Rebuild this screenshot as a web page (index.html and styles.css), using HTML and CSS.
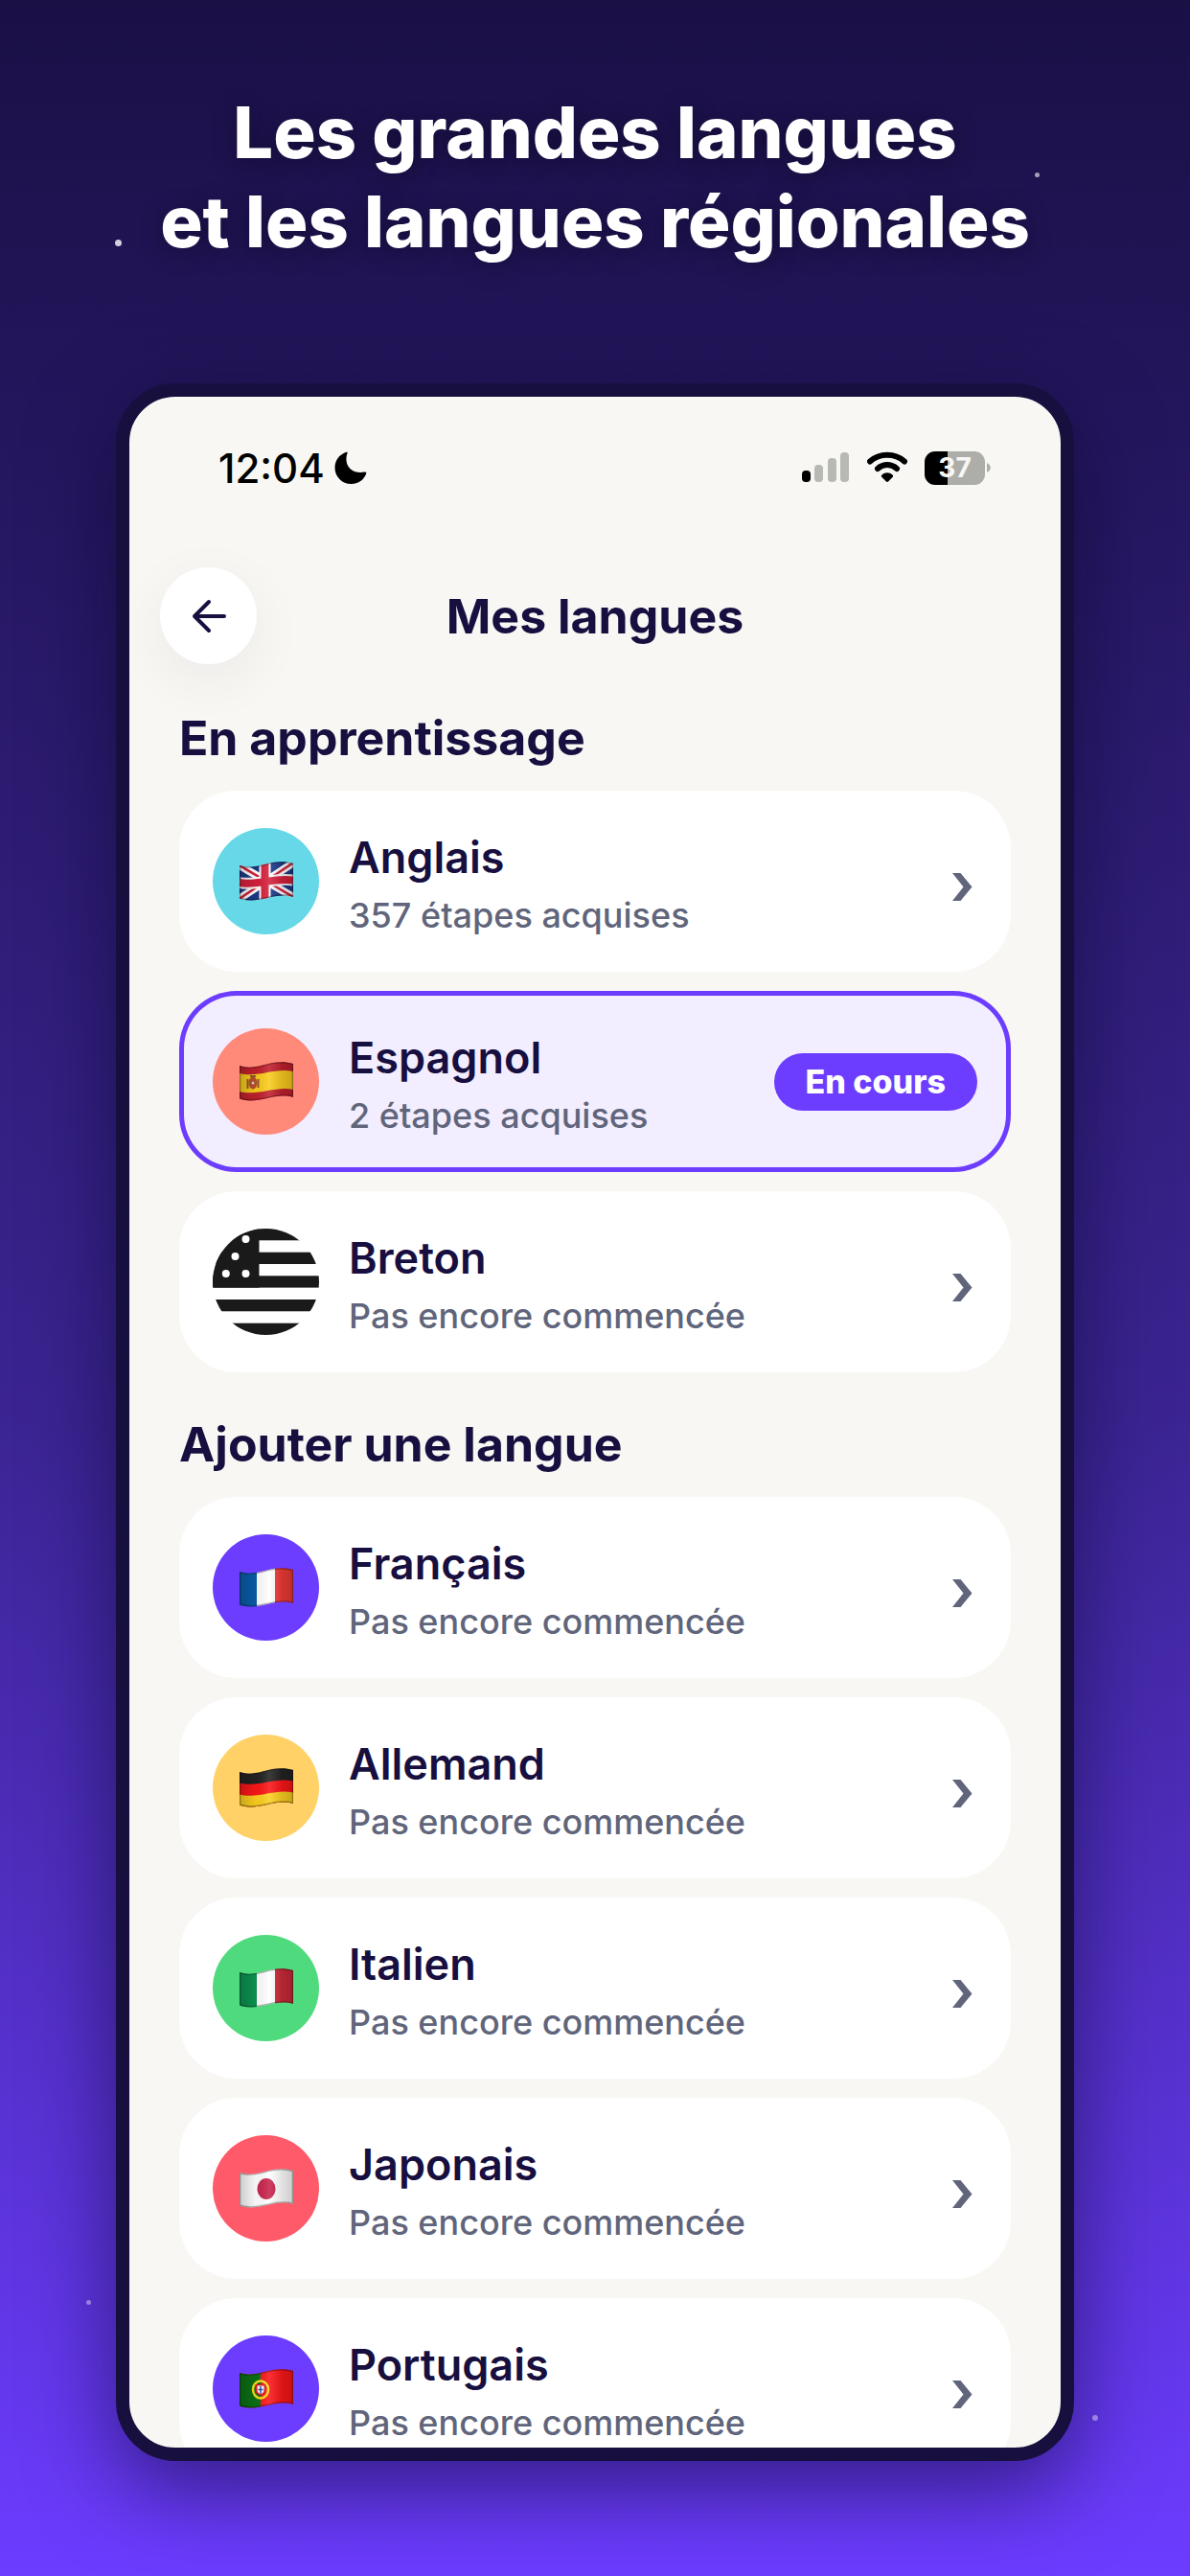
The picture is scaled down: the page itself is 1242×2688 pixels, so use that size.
FILE: index.html
```html
<!DOCTYPE html>
<html lang="fr">
<head>
  <meta charset="UTF-8">
  <meta name="viewport" content="width=device-width, initial-scale=1.0">
  <title>Mes langues</title>
  <link rel="stylesheet" href="styles.css">
</head>
<body>
  <!-- shared shapes -->
  <svg class="defs" width="0" height="0" aria-hidden="true">
    <defs>
      <clipPath id="wave"><path d="M0 4 C7 6.500 15 6 24 3.500 C36 0 46 -1 56 2 V37 C47 34 37 36 29 38 C17 41 8 41.500 0 38.500 Z"/></clipPath>
      <linearGradient id="fold" x1="0" x2="1" y1="0" y2="0">
        <stop offset="0" stop-color="#000" stop-opacity=".2"/>
        <stop offset=".3" stop-color="#000" stop-opacity=".04"/>
        <stop offset=".55" stop-color="#fff" stop-opacity=".12"/>
        <stop offset=".8" stop-color="#000" stop-opacity=".12"/>
        <stop offset="1" stop-color="#000" stop-opacity=".2"/>
      </linearGradient>
      <g id="shade">
        <rect width="56" height="42" fill="url(#fold)"/>
        <path d="M0 4 C7 6.500 15 6 24 3.500 C36 0 46 -1 56 2 V37 C47 34 37 36 29 38 C17 41 8 41.500 0 38.500 Z" fill="none" stroke="#000" stroke-opacity=".3" stroke-width="2.500"/>
      </g>
      <symbol id="chevron" viewBox="0 0 32 48">
        <path d="M6 15 H14.500 L26.500 29.500 L14.500 44 H6 L17.500 29.500 Z" fill="#60657b"/>
      </symbol>
    </defs>
  </svg>

  <span class="star star-1"></span>
  <span class="star star-2"></span>
  <span class="star star-3"></span>
  <span class="star star-4"></span>

  <h1 class="headline">Les grandes langues<br>et les langues régionales</h1>

  <main class="phone">
    <div class="status">
      <span class="time">12:04</span>
      <svg class="moon" width="34" height="34" viewBox="0 0 34 34"><path d="M12.500 .8 C13.500 .3 14 1 13.500 2 C9.500 13 17 24.500 31.500 21.500 C33 21.200 33.700 22 33.200 23.200 C31 29.500 25 34 17.500 34 C8 34 .5 26.500 .5 17 C.5 9.500 5.500 3 12.500 .8 Z"/></svg>
      <div class="status-right">
        <svg width="50" height="34" viewBox="0 0 50 34">
          <rect x="0" y="20" width="9" height="12" rx="4"/>
          <g fill="#b8b8b4">
            <rect x="13" y="14" width="9" height="18" rx="4"/>
            <rect x="27" y="7" width="9" height="25" rx="4"/>
            <rect x="40" y="1" width="9" height="31" rx="4"/>
          </g>
        </svg>
        <svg width="42" height="34" viewBox="0 0 42 34">
          <g fill="none" stroke="#000" stroke-width="6" stroke-linecap="round">
            <path d="M3 10.500 C13 1.500 29 1.500 39 10.500"/>
            <path d="M11 18 C17 12.800 25 12.800 31 18"/>
          </g>
          <path d="M15.500 24.500 C18.500 21.500 23.500 21.500 26.500 24.500 C27.500 25.500 27.300 26.300 26.500 27 L22.300 31.200 C21.300 32.200 20.700 32.200 19.700 31.200 L15.500 27 C14.700 26.300 14.500 25.500 15.500 24.500 Z"/>
        </svg>
        <div class="battery">
          <span class="battery-level">37</span>
          <svg width="4" height="10" viewBox="0 0 4 10"><path d="M0 0 C5 2 5 8 0 10 Z" fill="#adaea9"/></svg>
        </div>
      </div>
    </div>

    <header class="topbar">
      <button class="back" type="button" aria-label="Retour">
        <svg width="36" height="36" viewBox="0 0 36 36" fill="none" stroke="#170f3f" stroke-width="4" stroke-linecap="round" stroke-linejoin="round"><path d="M18 3 L3 18 L18 33 M3 18 H34"/></svg>
      </button>
      <h2 class="title">Mes langues</h2>
    </header>

    <section class="group">
      <h3>En apprentissage</h3>
      <button class="card" type="button">
        <span class="flag cyan">
          <svg width="56" height="42" viewBox="0 0 56 42"><g clip-path="url(#wave)">
            <rect width="56" height="42" fill="#1c3a8a"/>
            <path d="M-2 3 L58 38 M-2 40 L58 0" stroke="#fff" stroke-width="8"/>
            <path d="M-2 3 L58 38 M-2 40 L58 0" stroke="#d5203c" stroke-width="2.500"/>
            <path d="M26.500 0 V42 M0 22 C18 26 36 16 56 19.500" fill="none" stroke="#fff" stroke-width="12"/>
            <path d="M26.500 0 V42 M0 22 C18 26 36 16 56 19.500" fill="none" stroke="#d5203c" stroke-width="8"/>
            <use href="#shade"/>
          </g></svg>
        </span>
        <span class="info"><span class="name">Anglais</span><span class="steps">357 étapes acquises</span></span>
        <svg class="chevron" width="32" height="48"><use href="#chevron"/></svg>
      </button>
      <button class="card active" type="button">
        <span class="flag coral">
          <svg width="56" height="42" viewBox="0 0 56 42"><g clip-path="url(#wave)">
            <rect width="56" height="42" fill="#c0202c"/>
            <path d="M0 12 C20 17 36 6 56 10 V29 C38 25 20 36 0 31 Z" fill="#facb1d"/>
            <ellipse cx="14" cy="22" rx="4.500" ry="6.500" fill="#b9502a"/>
            <path d="M8.500 18 V28 M19.500 18 V27 M11 15 H17" stroke="#8d5a2a" stroke-width="2"/>
            <circle cx="14" cy="22" r="1.500" fill="#d9c6d0"/>
            <use href="#shade"/>
          </g></svg>
        </span>
        <span class="info"><span class="name">Espagnol</span><span class="steps">2 étapes acquises</span></span>
        <span class="badge">En cours</span>
      </button>
      <button class="card" type="button">
        <span class="flag">
          <svg width="111" height="111" viewBox="0 0 111 111">
            <clipPath id="disc"><circle cx="55.500" cy="55.500" r="55.500"/></clipPath>
            <g clip-path="url(#disc)" fill="#1a1a1a">
              <rect width="111" height="12.300"/>
              <rect y="24.700" width="111" height="12.300"/>
              <rect y="49.300" width="111" height="12.300"/>
              <rect y="74" width="111" height="12.300"/>
              <rect y="98.700" width="111" height="12.300"/>
              <rect width="48.500" height="61.600"/>
              <g fill="#fff"><circle cx="34.500" cy="11" r="4"/><circle cx="23.500" cy="29" r="4"/><circle cx="13.800" cy="47" r="4"/><circle cx="34.500" cy="47" r="4"/></g>
            </g>
          </svg>
        </span>
        <span class="info"><span class="name">Breton</span><span class="steps">Pas encore commencée</span></span>
        <svg class="chevron" width="32" height="48"><use href="#chevron"/></svg>
      </button>
    </section>

    <section class="group">
      <h3>Ajouter une langue</h3>
      <button class="card" type="button">
        <span class="flag violet">
          <svg width="56" height="42" viewBox="0 0 56 42"><g clip-path="url(#wave)">
            <rect width="18" height="42" fill="#0a5ca8"/><rect x="18" width="19" height="42" fill="#fff"/><rect x="37" width="19" height="42" fill="#ee3a36"/>
            <use href="#shade"/>
          </g></svg>
        </span>
        <span class="info"><span class="name">Français</span><span class="steps">Pas encore commencée</span></span>
        <svg class="chevron" width="32" height="48"><use href="#chevron"/></svg>
      </button>
      <button class="card" type="button">
        <span class="flag amber">
          <svg width="56" height="42" viewBox="0 0 56 42"><g clip-path="url(#wave)">
            <rect width="56" height="42" fill="#222"/>
            <path d="M0 15.500 C20 20.500 36 9.500 56 13.500 V42 H0 Z" fill="#fb1517"/>
            <path d="M0 27.500 C20 32.500 36 21.500 56 25.500 V42 H0 Z" fill="#fbcf1f"/>
            <use href="#shade"/>
          </g></svg>
        </span>
        <span class="info"><span class="name">Allemand</span><span class="steps">Pas encore commencée</span></span>
        <svg class="chevron" width="32" height="48"><use href="#chevron"/></svg>
      </button>
      <button class="card" type="button">
        <span class="flag green">
          <svg width="56" height="42" viewBox="0 0 56 42"><g clip-path="url(#wave)">
            <rect width="18" height="42" fill="#0b9450"/><rect x="18" width="19" height="42" fill="#fff"/><rect x="37" width="19" height="42" fill="#c92a38"/>
            <use href="#shade"/>
          </g></svg>
        </span>
        <span class="info"><span class="name">Italien</span><span class="steps">Pas encore commencée</span></span>
        <svg class="chevron" width="32" height="48"><use href="#chevron"/></svg>
      </button>
      <button class="card" type="button">
        <span class="flag red">
          <svg width="56" height="42" viewBox="0 0 56 42"><g clip-path="url(#wave)">
            <rect width="56" height="42" fill="#fff"/>
            <ellipse cx="28" cy="21" rx="9.500" ry="11" fill="#c8244c"/>
            <use href="#shade"/>
          </g></svg>
        </span>
        <span class="info"><span class="name">Japonais</span><span class="steps">Pas encore commencée</span></span>
        <svg class="chevron" width="32" height="48"><use href="#chevron"/></svg>
      </button>
      <button class="card" type="button">
        <span class="flag violet">
          <svg width="56" height="42" viewBox="0 0 56 42"><g clip-path="url(#wave)">
            <rect width="56" height="42" fill="#fa1618"/><rect width="22" height="42" fill="#0c7015"/>
            <ellipse cx="22" cy="21.500" rx="8" ry="9" fill="none" stroke="#f4e01c" stroke-width="2.500"/>
            <path d="M16.500 16 H27.500 V22 C27.500 29 16.500 29 16.500 22 Z" fill="#e01a20"/>
            <path d="M18.500 17.500 H25.500 V22 C25.500 27 18.500 27 18.500 22 Z" fill="#fff"/>
            <path d="M22 18 V25.500 M19.500 21.500 H24.500" stroke="#2a4db0" stroke-width="1.500"/>
            <use href="#shade"/>
          </g></svg>
        </span>
        <span class="info"><span class="name">Portugais</span><span class="steps">Pas encore commencée</span></span>
        <svg class="chevron" width="32" height="48"><use href="#chevron"/></svg>
      </button>
    </section>
  </main>
</body>
</html>
```
FILE: styles.css
```css
* {
  box-sizing: border-box;
  margin: 0;
  padding: 0;
}

body {
  height: 100vh;
  position: relative;
  display: flex;
  flex-direction: column;
  padding: 92px 121px 120px;
  overflow: hidden;
  background: linear-gradient(180deg, #1a1046 0%, #3b2492 55%, #6c3cff 100%);
  color: #170f3f;
  font-family: Inter, "Liberation Sans", sans-serif;
}

.defs {
  position: absolute;
}

.headline {
  margin: 0 -60px 122px;
  color: #fff;
  font-size: 74px;
  font-weight: 800;
  line-height: 93px;
  text-align: center;
  text-shadow: 0 4px 24px rgba(0, 0, 0, 0.35);
}

/* stars in the sky */
.star {
  position: absolute;
  width: 6px;
  height: 6px;
  border-radius: 50%;
  background: #fff;
  opacity: 0.4;
}

.star-1 {
  top: 250px;
  left: 120px;
  width: 7px;
  height: 7px;
  opacity: 0.8;
}

.star-2 {
  top: 180px;
  right: 157px;
  width: 5px;
  height: 5px;
  opacity: 0.6;
}

.star-3 {
  bottom: 283px;
  left: 90px;
  width: 5px;
  height: 5px;
}

.star-4 {
  right: 96px;
  bottom: 162px;
}

.phone {
  flex: 1;
  min-height: 0;
  overflow: hidden;
  border: 14px solid #17103f;
  border-radius: 62px;
  background: #f8f7f3;
  box-shadow: 0 30px 90px rgba(10, 5, 40, 0.55);
}

.status {
  display: flex;
  align-items: center;
  height: 52px;
  margin-top: 48px;
  padding: 0 73px 0 93px;
}

.time {
  margin-right: 10px;
  color: #000;
  font-size: 42px;
  font-weight: 500;
}

.status-right {
  display: flex;
  align-items: center;
  gap: 18px;
  margin-left: auto;
}

.battery {
  display: flex;
  align-items: center;
  gap: 2px;
}

.battery-level {
  width: 63px;
  border-radius: 11px;
  background: linear-gradient(90deg, #000 38%, #adaea9 38%);
  color: #f8f7f3;
  font-size: 28px;
  font-weight: 700;
  line-height: 35px;
  text-align: center;
}

.topbar {
  display: grid;
  grid-template-columns: 101px 1fr 101px;
  align-items: center;
  margin: 78px 0 2px;
  padding: 0 32px;
}

.back {
  display: flex;
  align-items: center;
  justify-content: center;
  width: 101px;
  height: 101px;
  border: none;
  border-radius: 50%;
  background: #fff;
  box-shadow: 0 16px 60px rgba(23, 15, 63, 0.06);
  cursor: pointer;
}

.title {
  font-size: 50px;
  font-weight: 700;
  text-align: center;
}

.group {
  display: flex;
  flex-direction: column;
  gap: 20px;
  padding: 42px 52px 0;
}

.group h3 {
  margin-bottom: 2px;
  font-size: 50px;
  font-weight: 700;
  line-height: 66px;
}

.card {
  display: flex;
  align-items: center;
  height: 189px;
  flex-shrink: 0;
  padding: 0 35px;
  border: none;
  border-radius: 60px;
  background: #fff;
  color: inherit;
  font-family: inherit;
  text-align: left;
  cursor: pointer;
}

.card.active {
  background: #f2edff;
  box-shadow: inset 0 0 0 5px #6c3cff;
}

.flag {
  display: flex;
  align-items: center;
  justify-content: center;
  width: 111px;
  height: 111px;
  flex-shrink: 0;
  border-radius: 50%;
}

.cyan { background: #66d8e7; }
.coral { background: #ff8a7a; }
.violet { background: #6c3cff; }
.amber { background: #ffd166; }
.green { background: #4fda7e; }
.red { background: #ff5a6a; }

.info {
  display: flex;
  flex-direction: column;
  flex: 1;
  margin-left: 31px;
  padding-top: 10px;
}

.name {
  font-size: 45px;
  font-weight: 600;
  line-height: 60px;
}

.steps {
  color: #60657b;
  font-size: 36px;
  font-weight: 500;
  line-height: 60px;
}

.badge {
  padding: 0 33px;
  border-radius: 30px;
  background: #6c3cff;
  color: #fff;
  font-size: 34px;
  font-weight: 800;
  line-height: 60px;
}
```
